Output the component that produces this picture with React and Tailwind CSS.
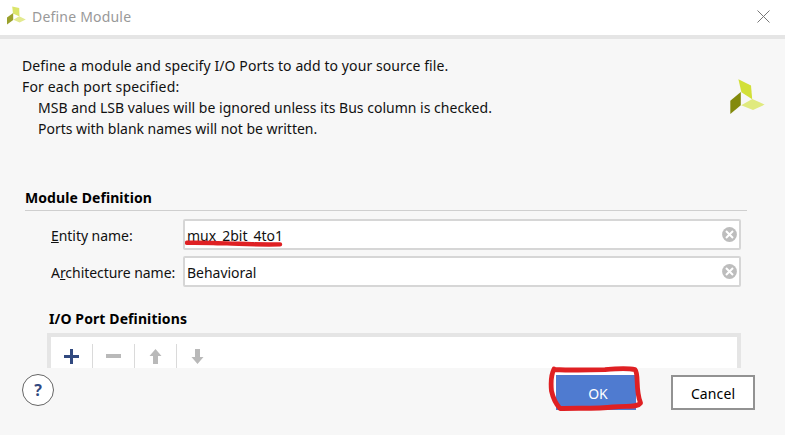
import React from "react";

function Logo({ className }) {
  return (
    <svg className={className} viewBox="0 0 35 36" aria-hidden="true">
      <path d="M8.4 0.2 21 6.4 22.2 20.3 11.4 13.2Z" fill="#d2e038" />
      <path d="M10.8 13 10.8 26.3 0.3 35 0.3 21.8Z" fill="#838a0c" />
      <path d="M11.2 26.2 22.3 20 34.6 25.6 23 31Z" fill="#e0ea7e" />
    </svg>
  );
}

function TitleLogo() {
  return (
    <svg className="mb-[3px] h-[20px] w-[19px]" viewBox="0 0 19 20" aria-hidden="true">
      <path d="M5.2 0.5 12.2 2 12.5 10.5 6 7.5Z" fill="#dbe56b" />
      <path d="M6.2 7 6.2 14 0 18.6 0 11.6Z" fill="#9aa12c" />
      <path d="M6.4 13.8 12.2 10.3 18.8 13.6 12.6 16.6Z" fill="#e3ea90" />
    </svg>
  );
}

function ClearIcon() {
  return (
    <svg className="h-[15px] w-[15px]" viewBox="0 0 15 15" aria-hidden="true">
      <circle cx="7.5" cy="7.5" r="7.4" fill="#bdbdbd" />
      <path d="M4 4 11 11M11 4 4 11" stroke="white" strokeWidth="2" />
    </svg>
  );
}

function Field({ label, value, marked }) {
  return (
    <div className="flex h-[31px] items-center">
      <label className="w-[132px] shrink-0 whitespace-nowrap pt-px tracking-[-0.05px]">{label}</label>
      <div className="relative flex h-[31px] w-[558px] items-center justify-between rounded-[2px] border-2 border-[#d6d6d6] bg-white pl-[2px] pr-[2px]">
        <span className="pt-px tracking-[-0.03px]">{value}</span>
        <ClearIcon />
        {marked && (
          <svg className="absolute left-0 top-[18px] h-[10px] w-[104px]" viewBox="0 0 104 10" aria-hidden="true">
            <path d="M2 3.8C16 3.4 28 4.2 42 4.4S60 5.8 95 5.4" fill="none" stroke="#df2023" strokeWidth="4.4" strokeLinecap="round" />
          </svg>
        )}
      </div>
    </div>
  );
}

function Tool({ children, last }) {
  return (
    <div className={"flex h-[25px] w-[42px] shrink-0 items-center justify-center " + (last ? "" : "border-r border-[#dadada]")}>
      <svg className="h-[15px] w-[15px]" viewBox="0 0 15 15" aria-hidden="true">{children}</svg>
    </div>
  );
}

export default function App() {
  return (
    <div className="flex h-[435px] w-[785px] flex-col overflow-hidden bg-[#f7f7f7] font-['Noto_Sans',sans-serif] text-[14px] leading-[21px] text-[#111]">
      <header className="flex h-[39px] shrink-0 items-center border-b-4 border-[#e5e5e5] bg-white pl-[7px] pr-[15px]">
        <TitleLogo />
        <h1 className="mb-[2px] ml-[6px] text-[14px] tracking-[0.2px] text-[#999]">Define Module</h1>
        <svg className="mb-[3px] ml-auto h-[13px] w-[13px]" viewBox="0 0 13 13" aria-hidden="true">
          <path d="M.5.5 12.5 12.5M12.5.5.5 12.5" stroke="#777" strokeWidth="1" />
        </svg>
      </header>

      <section className="flex h-[148px] shrink-0 justify-between pl-[22px] pr-[20px] pt-[16px]">
        <div className="whitespace-nowrap">
          <p className="tracking-[0.085px]">Define a module and specify I/O Ports to add to your source file.</p>
          <p className="tracking-[0.15px]">For each port specified:</p>
          <p className="pl-4 tracking-[0.01px]">MSB and LSB values will be ignored unless its Bus column is checked.</p>
          <p className="pl-4 tracking-[-0.02px]">Ports with blank names will not be written.</p>
        </div>
        <Logo className="mt-[24px] h-[36px] w-[35px]" />
      </section>

      <main className="h-[181px] shrink-0 overflow-hidden pl-[25px]">
        <h2 className="h-[24px] w-[722px] border-b border-[#cfcfcf] font-bold text-black"><span className="tracking-[0.08px]">Module Definition</span></h2>
        <div className="mt-[8px] flex flex-col gap-[6px] pl-[26px]">
          <Field label={<span><u>E</u>ntity name:</span>} value="mux_2bit_4to1" marked />
          <Field label={<span>A<u>r</u>chitecture name:</span>} value="Behavioral" />
        </div>
        <h2 className="ml-[24px] mt-[21px] h-[25px] font-bold text-black"><span className="tracking-[0.1px]">I/O Port Definitions</span></h2>
        <div className="ml-[22px] flex h-[60px] w-[694px] border-4 border-[#e5e5e5] bg-white pt-[7px]">
          <Tool><path d="M0 7.5H15M7.5 0V15" stroke="#31497f" strokeWidth="3" /></Tool>
          <Tool><path d="M0 7H15" stroke="#b9b9b9" strokeWidth="4" /></Tool>
          <Tool><path d="M7.5 0 13.5 7H10V15H5V7H1.5Z" fill="#b9b9b9" /></Tool>
          <Tool last><path d="M6.5 15 12.5 8H9V0H4V8H0.5Z" fill="#b9b9b9" /></Tool>
        </div>
      </main>

      <footer className="flex flex-1 items-start pl-[22px] pr-[30px] pt-[6px]">
        <button className="flex h-[32px] w-[32px] items-center justify-center rounded-full border border-[#666] bg-white text-[16px] font-bold text-[#31497f]">?</button>
        <div className="relative ml-auto mt-px flex h-[35px] w-[80px] items-center justify-center bg-[#4f7bd0] shadow-[-1px_-3px_0_0_white]">
          <button className="pl-[4px] pt-px text-white">OK</button>
          <svg className="absolute -left-[8px] -top-[10px] h-[50px] w-[98px]" viewBox="0 0 98 50" aria-hidden="true">
            <path d="M6 4.5C20 5.2 43 5 57 4.6 68 3.6 81 3.2 87 4.6 91 9 87 24 92.5 38 89 43 80 40.6 65 42 50 44 27 42.8 12 43.5 8 39 5 33 3.5 26 2.5 16 4 8 6 4" fill="none" stroke="#df2023" strokeWidth="4.8" strokeLinecap="round" strokeLinejoin="round" />
          </svg>
        </div>
        <button className="ml-[35px] mt-px flex h-[35px] w-[84px] items-center justify-center border-2 border-[#929292] bg-white pt-[2px] tracking-[0.1px] text-black">Cancel</button>
      </footer>
    </div>
  );
}
